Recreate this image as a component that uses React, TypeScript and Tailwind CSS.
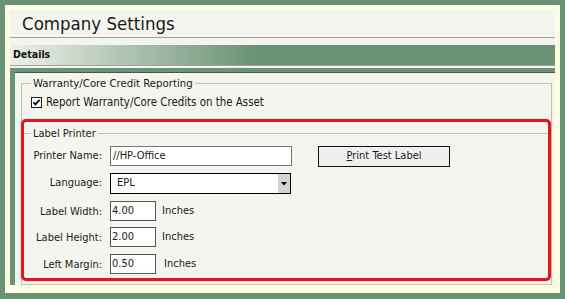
import React from "react";

const UI = "font-['DejaVu_Sans_Condensed','Liberation_Sans',sans-serif]";

function Row({ label, children, className = "" }: { label: string; children: React.ReactNode; className?: string }) {
  return (
    <div className={`flex items-center ${className}`}>
      <div className="w-[78px] text-right pr-0 leading-[13px] text-[#1a1a1a]">{label}</div>
      <div className="ml-[8px] flex items-center">{children}</div>
    </div>
  );
}

export default function App() {
  return (
    <div className={`w-[565px] h-[299px] bg-[#6a9275] pt-[5px] pl-[5px] overflow-hidden ${UI} text-[11px]`}>
      <div className="w-[555px] h-[288px] bg-[#fdfde4] pt-[5px] pl-[5px] pr-[5px]">
        <div className="h-[275px] bg-[#f5f5f0] flex flex-col">
          <div className="h-[28px] shrink-0 border-b border-[#a0a0a0] flex items-center pl-[12px] text-[18.5px] text-[#1a1a1a]">
            Company Settings
          </div>
          <div className="mt-[7px] h-[21px] shrink-0 border-b border-[#a0a0a0] bg-[linear-gradient(90deg,#eef0ea_0%,#6a9275_45%)] flex items-center pl-[3px] text-[10.5px] font-bold text-[#111]">
            Details
          </div>
          <div className="mt-[2px] flex-1 border-t-[4px] border-l-[5px] border-[#6a9275]">
            <div className="h-full border-t border-[#505050] pt-[4px] pl-[6px] pr-[3px]">
              <fieldset className="border border-[#c6c3a9] pb-[4px] text-[#1a1a1a]">
                <legend className="ml-[9px] px-[2px] leading-[13px] text-[11.3px]">Warranty/Core Credit Reporting</legend>
                <div className="pt-[6px] pl-[9px] flex items-center h-[19px]">
                  <svg width="11" height="11" viewBox="0 0 11 11" className="shrink-0">
                    <rect x="0.5" y="0.5" width="10" height="10" fill="#ffffff" stroke="#1c1c1c" />
                    <path d="M2.4 5.2 L4.4 7.4 L8.6 2.9" fill="none" stroke="#000" strokeWidth="1.7" />
                  </svg>
                  <span className="ml-[4px] leading-[13px] text-[11.4px]">Report Warranty/Core Credits on the Asset</span>
                </div>
                <div className="relative mt-[18px] ml-[1px] mr-[1px]">
                  <fieldset className="border border-[#c6c3a9] pb-[5px]">
                    <legend className="ml-[7px] px-[2px] leading-[13px]">Label Printer</legend>
                    <div className="pt-[6px] flex flex-col">
                      <div className="flex items-start h-[21px]">
                        <div className="w-[78px] h-[20px] flex items-center justify-end">Printer Name:</div>
                        <div className="ml-[8px] w-[182px] h-[20px] border border-[#767676] bg-white flex items-center pl-[2px]">//HP-Office</div>
                        <button className="ml-[26px] w-[132px] h-[21px] border border-[#111] bg-[#efefef] flex items-center justify-center text-[11px] text-[#1a1a1a]">
                          <span><span className="underline">P</span>rint Test Label</span>
                        </button>
                      </div>
                      <div className="mt-[6px] flex items-center h-[21px]">
                        <div className="w-[78px] flex justify-end">Language:</div>
                        <div className="ml-[8px] w-[181px] h-[21px] border border-[#000] bg-white flex items-stretch">
                          <div className="flex-1 flex items-center pl-[6px]">EPL</div>
                          <div className="w-[12px] bg-[#d4d4d4] flex items-center justify-center">
                            <svg width="6" height="4" viewBox="0 0 6 4"><path d="M0 0 H6 L3 3.5 Z" fill="#000" /></svg>
                          </div>
                        </div>
                      </div>
                      <Row label="Label Width:" className="mt-[7px] h-[20px]">
                        <div className="w-[46px] h-[20px] border border-[#555] bg-white flex items-center pl-[1px]">4.00</div>
                        <span className="ml-[6px]">Inches</span>
                      </Row>
                      <Row label="Label Height:" className="mt-[6px] h-[20px]">
                        <div className="w-[46px] h-[20px] border border-[#555] bg-white flex items-center pl-[1px]">2.00</div>
                        <span className="ml-[6px]">Inches</span>
                      </Row>
                      <Row label="Left Margin:" className="mt-[7px] h-[20px]">
                        <div className="w-[46px] h-[20px] border border-[#555] bg-white flex items-center pl-[1px]">0.50</div>
                        <span className="ml-[8px]">Inches</span>
                      </Row>
                    </div>
                  </fieldset>
                  <div className="absolute left-[-2px] right-[-1px] top-[-8px] bottom-[-1px] border-[3px] border-[#e3161b] rounded-[5px] shadow-[0_0_1px_#ff6060] pointer-events-none" />
                </div>
              </fieldset>
            </div>
          </div>
        </div>
      </div>
    </div>
  );
}
